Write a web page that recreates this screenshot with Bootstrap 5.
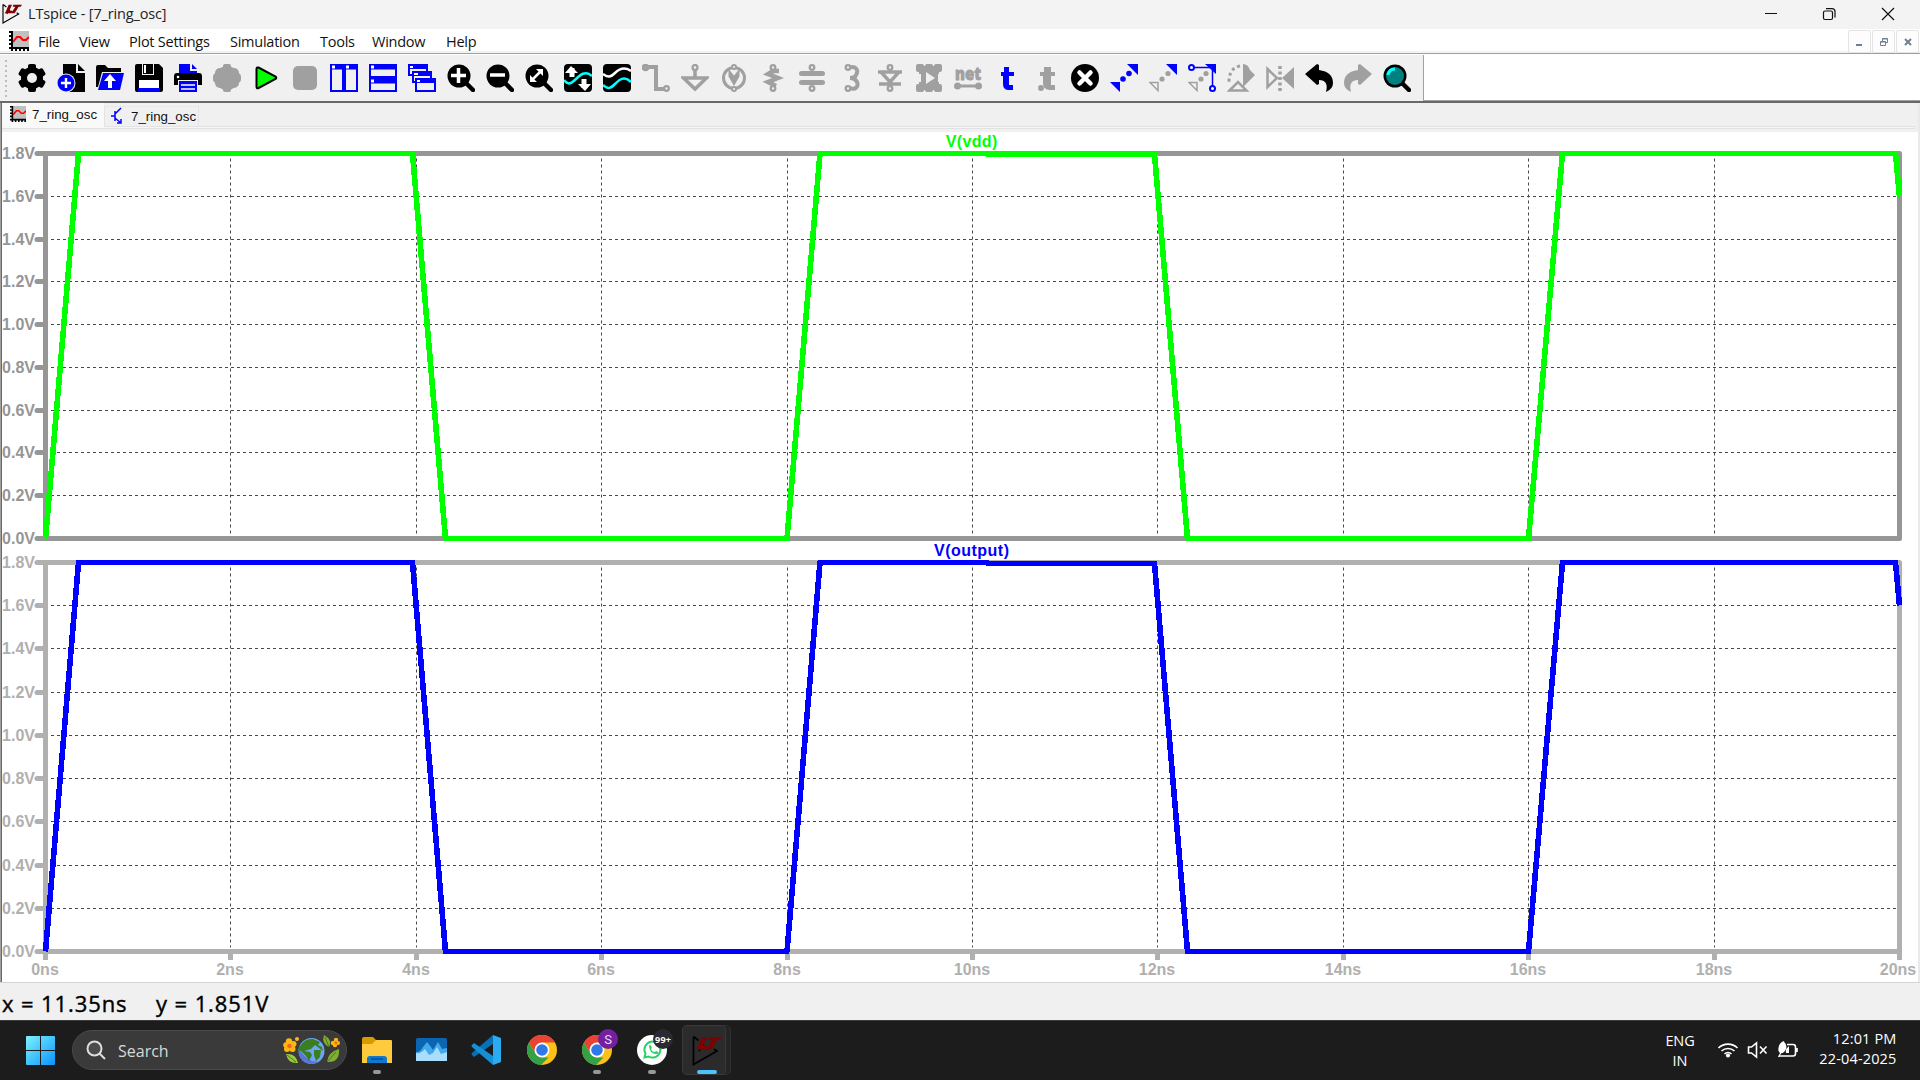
<!DOCTYPE html>
<html lang="en">
<head>
<meta charset="utf-8">
<title>LTspice - [7_ring_osc]</title>
<link href="https://cdn.jsdelivr.net/npm/bootstrap@5.3.0/dist/css/bootstrap.min.css" rel="stylesheet">
<style>
html,body{width:1920px;height:1080px;overflow:hidden;background:#fff}
body{font-family:"Open Sans","Noto Sans",sans-serif;color:#111;line-height:1}
svg{display:block;flex:none}
.titlebar{height:29px;background:#f3f3f3}
.titlebar .caption{font-size:14.5px;letter-spacing:-.15px;color:#222;margin-left:6px;line-height:27px;height:28px}
.menubar{height:25px;border-bottom:1px solid #a0a0a0;box-shadow:inset 0 -2px #f3f3f3}
.menubar .entry{font-size:14.5px;letter-spacing:-.25px;height:24px;line-height:25px;white-space:nowrap}
.mdi{width:23px;height:23px;border:1px solid #e4e4e4;border-radius:2px;background:#fdfdfd}
.toolrow{height:49px;border-bottom:2px solid #696969;border-top:1px solid #fff;box-shadow:inset 0 -1px #a0a0a0}
.tools{width:1424px;background:#f0f0f0;border-right:1px solid #a0a0a0;gap:11px;padding:0 0 0 5px;height:46px}
.grip{width:2px;height:37px;background:repeating-linear-gradient(#bdbdbd 0 2px,#f0f0f0 2px 5px)}
.child{height:879px;border-left:1px solid #a0a0a0;background:#fff;box-shadow:inset 1px 0 #696969,inset -2px 0 #e9e9e9}
.tabs{height:29px;background:#f0f0f0;margin:0 2px 0 1px;font-family:"Liberation Sans",Arial,sans-serif;font-size:13.3px}
.tabs .sheet{height:25px;background:#f9f9f9;width:102px;padding-left:8px}
.tabs .other{height:21px;border:1px solid #e3e3e3;border-top-color:#e8e8e8;margin-top:3px;width:95px;padding-left:6px}
.tabedge{height:3px;border:1px solid #e2e2e2;background:#f6f6f6;margin:0 3px 0 0}
.status{height:38px;background:#f0f0f0;border-top:1px solid #d4d4d4;font-size:22px;letter-spacing:.9px;font-weight:500;color:#000;padding-left:2px;line-height:41px}
.status .coord{white-space:nowrap;-webkit-text-stroke:.4px #000}
.taskbar{height:60px;background:#1c1c1c;border-top:1px solid #3b3b3b;color:#fff}
.searchbox{width:275px;height:40px;border-radius:20px;background:#3a3a3a;border:1px solid #4a4a4a;margin-left:17px;padding:0 6px 0 13px;font-size:16px;color:#d8d8d8}
.app{width:55px;height:59px;padding-top:14px;position:relative}
.app .run{position:absolute;left:23.5px;top:49px;width:8px;height:4px;border-radius:2px;background:#989898}
.app.current .run{left:17.5px;width:20px;background:#4cc2ff}
.app.current::before{content:"";position:absolute;left:3px;top:4px;width:49px;height:50px;border-radius:5px;background:#242424;border:1px solid #303030}
.app.current::after{content:"";position:absolute;left:3px;top:4px;width:44px;height:50px;border-radius:5px;background:#2b2b2b;border:1px solid #393939}
.app.current svg,.app.current .run{z-index:1;position:relative}
.app.current .run{position:absolute}
.tray{font-size:14.5px;line-height:20px;letter-spacing:-.3px}
.tray .clock{letter-spacing:.15px;padding:8px 23.5px 0 0;width:120px}
.axis{font:bold 16px "Liberation Sans",Arial,sans-serif}
</style>
<script src="https://cdn.jsdelivr.net/npm/bootstrap@5.3.0/dist/js/bootstrap.bundle.min.js"></script>
</head>
<body class="d-flex flex-column">
<svg width="0" height="0" class="position-absolute"><defs>
<symbol id="lt" viewBox="0 0 30 32"><path d="M1.5 1.500v28L25 16l-3-2M1.500 1.500l5 4M12 10l-5 6" fill="none" stroke="#000" stroke-width="1.700"/><path d="M10 2h5l-4 9h5l-2 4H4l2-3zM17 2h13l-2 3h-3l-6 10h-5l6-10h-4z" fill="#800000"/></symbol>
<symbol id="plot" viewBox="0 0 20 20"><path fill="#c0c0c0" d="M3 0h17v17H3z"/><path d="M3 0v17h17M0 1h3M0 5h3M0 9h3M0 13h3M0 17h3v3M7 17v3M11 17v3M15 17v3M19 17v3" fill="none" stroke="#000" stroke-width="2"/><path d="M4 11l4-5h3l3 3h3l3-3" stroke="red" stroke-width="2" fill="none"/></symbol>
<symbol id="lens" viewBox="0 0 28 28"><path d="M19 19l7 7" stroke="#000" stroke-width="4.500" stroke-linecap="round"/><circle cx="12" cy="12" r="11.500"/></symbol>
<symbol id="chrome" viewBox="0 0 30 30"><circle cx="15" cy="15" r="15" fill="#fbc116"/><path d="M2 7.500A15 15 0 0 1 28 7.500H15L8.500 18.700z" fill="#ea4335"/><path d="M2 7.500L8.500 18.700 15 22.500h6.500L14 30A15 15 0 0 1 2 7.500z" fill="#34a047"/><circle cx="15" cy="15" r="7.500" fill="#fff"/><circle cx="15" cy="15" r="5.800" fill="#3078e8"/></symbol>
</defs></svg>

<header class="titlebar d-flex">
 <svg width="20" height="22" style="margin:3px 0 0 2px"><use href="#lt"/></svg>
 <div class="caption">LTspice - [7_ring_osc]</div>
 <svg class="ms-auto" width="160" height="29" viewBox="1760 0 160 29" fill="none" stroke="#111" stroke-width="1.200"><path d="M1765 13.500h12M1882 8l12 12M1894 8l-12 12"/><rect x="1823.500" y="11" width="9" height="8.500" rx="1.500"/><path d="M1826 8.600h6q3 0 3 3v6"/></svg>
</header>

<nav class="menubar d-flex" aria-label="Main menu">
 <svg width="20" height="20" style="margin:2px 9px 0 9px"><use href="#plot"/></svg>
 <div class="entry" style="width:41px">File</div><div class="entry" style="width:50px">View</div><div class="entry" style="width:101px">Plot Settings</div><div class="entry" style="width:90px">Simulation</div><div class="entry" style="width:52px">Tools</div><div class="entry" style="width:74px">Window</div><div class="entry">Help</div>
 <div class="ms-auto d-flex gap-1 me-0" style="gap:1px!important;padding:1px 1px 0 0">
  <div class="mdi"><svg width="21" height="21" fill="#708090"><path d="M7 13h6v2H7z"/></svg></div>
  <div class="mdi"><svg width="21" height="21" fill="none" stroke="#708090"><path d="M7.500 10.500h5v4h-5zM7.500 11h5M9.500 10V7.500h5v4H13M9.500 8h5"/></svg></div>
  <div class="mdi"><svg width="21" height="21" stroke="#708090" stroke-width="2"><path d="M8 8l6 6M14 8l-6 6"/></svg></div>
 </div>
</nav>

<div class="toolrow">
<div class="tools d-flex align-items-center">
<div class="grip"></div>
<svg width="28" height="28"><g><rect x="10" y="0" width="8" height="28" rx="2"/><rect x="10" y="0" width="8" height="28" rx="2" transform="rotate(60 14 14)"/><rect x="10" y="0" width="8" height="28" rx="2" transform="rotate(120 14 14)"/></g><circle cx="14" cy="14" r="11"/><circle cx="14" cy="14" r="5" fill="#f0f0f0"/></svg>
<svg width="28" height="28"><path d="M6 0h13v9h9v19H6zM21 0l7 7h-7z"/><circle cx="9" cy="19" r="9.500" fill="#f0f0f0"/><circle cx="9" cy="19" r="8.500" fill="#00f"/><path d="M9 14v10M4 19h10" stroke="#fff" stroke-width="2.400"/></svg>
<svg width="28" height="28"><path d="M0 3q0-2 2-2h7l3 3h13v4H6L2 23H0z"/><path d="M7 9h21l-4 17H2z" fill="#00f"/><path d="M14 24v-9" stroke="#fff" stroke-width="4"/><path d="M8 17l6-7 6 7z" fill="#fff"/></svg>
<svg width="28" height="28"><path d="M2 0h22l4 4v22q0 2-2 2H2q-2 0-2-2V2q0-2 2-2z"/><path d="M7 0h12v11H7z" fill="#f0f0f0"/><path d="M8 0h10v10H8z"/><path d="M9 1h2v8H9z" fill="#fff"/><path d="M4 16h20v8H4z" fill="#fff"/><path d="M3 24h22v4H3z" fill="#00f"/></svg>
<svg width="28" height="28"><path d="M5 0h11v7h7v3H5z" fill="#00f"/><path d="M18 0l5 5h-5z" fill="#00f"/><path d="M3 9h22q3 0 3 3v9H0v-9q0-3 3-3z"/><circle cx="4" cy="13" r="1.300" fill="#fff"/><path d="M4 16h20v12H4z" fill="#f0f0f0"/><path d="M5 17h18v11H5z" fill="#00f"/><path d="M7 21h14M7 25h14" stroke="#fff" stroke-width="1.500"/></svg>
<svg width="28" height="28" fill="#a0a0a0"><circle cx="14" cy="14" r="12"/><rect x="10" width="8" height="28" rx="2"/><rect y="9" width="28" height="10" rx="4"/><rect x="2" y="4" width="24" height="20" rx="5"/></svg>
<svg width="28" height="28"><path d="M4.500 5q0-2 2-1.500l17 9q1.500 1.500 0 2.500l-17 9q-2 1-2-1.500z" fill="#0f0" stroke="#000" stroke-width="2"/></svg>
<svg width="28" height="28"><rect x="2" y="2" width="24" height="24" rx="5" fill="#a0a0a0"/></svg>
<svg width="28" height="28" fill="#f0f0f0" stroke="#00f" stroke-width="2"><path d="M1 1h12v26H1zM15 1h12v26H15z"/><path d="M1 3h26" stroke-width="5"/><path d="M2 3h3M16 3h3" stroke="#fff" stroke-width="3"/></svg>
<svg width="28" height="28" fill="#f0f0f0" stroke="#00f" stroke-width="2"><path d="M1 1h26v12H1zM1 15h26v12H1z"/><path d="M1 3h26M1 17h26" stroke-width="5"/><path d="M2 3h3M2 17h3" stroke="#fff" stroke-width="3"/></svg>
<svg width="28" height="28" fill="#f0f0f0" stroke="#00f" stroke-width="2"><path d="M1 1h18v10H1zM5 8h18v10H5zM8 15h19v12H8z"/><path d="M1 3h19M5 10h19M8 17h19" stroke-width="4"/><path d="M2 3h3M6 10h4M9 17h3" stroke="#fff"/></svg>
<svg width="28" height="28"><use href="#lens"/><path d="M11.500 4v15M4 11.500h15" stroke="#fff" stroke-width="3.500"/></svg>
<svg width="28" height="28"><use href="#lens"/><path d="M4 11h15" stroke="#fff" stroke-width="3.500"/></svg>
<svg width="28" height="28"><use href="#lens"/><path d="M7 16L16 7" stroke="#fff" stroke-width="2.500"/><path d="M11 5h7v7zM5 11v7h7z" fill="#fff"/></svg>
<svg width="28" height="28"><rect width="28" height="28" rx="4"/><path d="M8 4v9M20 15v9" stroke="#fff" stroke-width="5"/><path d="M1 9l6-7 7 7zM14 20h13l-6 7z" fill="#fff"/><path d="M0 16c4 6 8 3 12-1s9-9 16-3" fill="none" stroke="#0ff" stroke-width="2.500"/></svg>
<svg width="28" height="28" fill="none" stroke-width="2.500"><rect width="28" height="28" rx="4" fill="#000"/><path d="M0 10c5 4 8 3 12-1s9-7 16-2" stroke="#fff"/><path d="M0 21c5 5 8 3 12-1s9-9 16-2" stroke="#0ff"/></svg>
<svg width="28" height="28" fill="none" stroke="#a0a0a0"><path d="M4 3h10v22h8" stroke-width="4"/><circle cx="3.500" cy="3.500" r="2" stroke-width="3.500"/><circle cx="24.500" cy="24.500" r="2.300" stroke-width="2.300"/></svg>
<svg width="28" height="28" fill="none" stroke="#a0a0a0"><circle cx="14" cy="3.500" r="2.500" stroke-width="2.300"/><path d="M14 6v8M2.500 14h23L14 25z" stroke-width="3.500"/></svg>
<svg width="28" height="28" fill="none" stroke="#a0a0a0" stroke-width="3"><circle cx="14" cy="14" r="10.500"/><circle cx="14" cy="3" r="2" fill="#f0f0f0" stroke-width="2"/><circle cx="14" cy="25" r="2" fill="#f0f0f0" stroke-width="2"/><path d="M10 9v3l4 7 4-7V9l-4 5z" fill="#a0a0a0"/></svg>
<svg width="28" height="28" fill="none" stroke="#a0a0a0"><path d="M20 7h-6l-5 3 10 4-10 4 8 4" stroke-width="4.500"/><circle cx="14" cy="3.500" r="2.300" fill="#f0f0f0" stroke-width="2.300"/><circle cx="14" cy="24.500" r="2.300" fill="#f0f0f0" stroke-width="2.300"/></svg>
<svg width="28" height="28" fill="none" stroke="#a0a0a0"><path d="M3.500 9.500h21M3.500 18.500h21" stroke-width="5" stroke-linecap="round"/><circle cx="14" cy="3.500" r="2.300" fill="#f0f0f0" stroke-width="2.300"/><circle cx="14" cy="24.500" r="2.300" fill="#f0f0f0" stroke-width="2.300"/></svg>
<svg width="28" height="28" fill="none" stroke="#a0a0a0"><path d="M11 4c8-3 11 2 8 7q-1 3-6 3 5 0 7 4c2 5-2 8-7 6" stroke-width="4"/><circle cx="11" cy="3.500" r="2.300" fill="#f0f0f0" stroke-width="2.300"/><circle cx="11" cy="24.500" r="2.300" fill="#f0f0f0" stroke-width="2.300"/></svg>
<svg width="28" height="28" fill="none" stroke="#a0a0a0"><path d="M2 8h24M5 8l9 10 9-10M3 20h22" stroke-width="3.500"/><circle cx="14" cy="3.500" r="2.300" fill="#f0f0f0" stroke-width="2.300"/><circle cx="14" cy="24.500" r="2.300" fill="#f0f0f0" stroke-width="2.300"/></svg>
<svg width="28" height="28" fill="#a0a0a0"><rect x="4" y="2" width="20" height="24"/><rect x="1" width="8" height="8" rx="2"/><rect x="10" width="8" height="7" rx="2"/><rect x="19" width="8" height="8" rx="2"/><rect x="1" y="20" width="8" height="8" rx="2"/><rect x="10" y="21" width="8" height="7" rx="2"/><rect x="19" y="20" width="8" height="8" rx="2"/><path d="M11 8l9 6-9 6zM4 10h2v8H4zM23 10h2v8h-2z" fill="#f0f0f0"/></svg>
<svg width="28" height="28" fill="#a0a0a0" overflow="visible"><text x="1" y="16" textLength="26" lengthAdjust="spacingAndGlyphs" font-family="Open Sans" font-weight="800" font-size="17" stroke="#a0a0a0" stroke-width=".8">net</text><path d="M4 22h20" stroke="#a0a0a0" stroke-width="3"/><circle cx="3.500" cy="22" r="3.500"/><circle cx="24.500" cy="22" r="3.500"/></svg>
<svg width="28" height="28"><path d="M11 3h5v5h5v4h-5v9h4v5h-4q-6 0-6-6v-8H8V8h3z" fill="#00f"/></svg>
<svg width="28" height="28" fill="#a0a0a0"><path d="M12 3h7v5h4v4h-4v9h4v5h-5q-7 0-7-7v-7H8V8h4z"/><circle cx="9" cy="24" r="3"/></svg>
<svg width="28" height="28"><circle cx="14" cy="14" r="14"/><path d="M8.500 8.500l11 11M19.500 8.500l-11 11" stroke="#fff" stroke-width="4.500" stroke-linecap="round"/></svg>
<svg width="28" height="28" fill="#00f"><path d="M17 0h11v11zM0 18h10v10z"/><circle cx="13" cy="15" r="2.800"/><circle cx="19" cy="9.500" r="2.800"/></svg>
<svg width="28" height="28" fill="#a0a0a0"><path d="M17 0h11v11z" fill="#00f"/><path d="M1 18.500h8v8z" fill="none" stroke="#a0a0a0" stroke-width="1.500"/><circle cx="13" cy="15" r="2.600"/><circle cx="19" cy="9.500" r="2.600"/></svg>
<svg width="28" height="28" fill="#a0a0a0"><path d="M17 0h11v10z" fill="#00f"/><path d="M1 18.500h8v8z" fill="none" stroke="#a0a0a0" stroke-width="1.500"/><circle cx="13" cy="15" r="2.600"/><circle cx="18" cy="9.500" r="2.600"/><path d="M5 3.500h19.500V22" stroke="#00f" stroke-width="1.500" fill="none"/><circle cx="3.500" cy="3.500" r="2.500" fill="#fff" stroke="#00f" stroke-width="2"/><circle cx="24.500" cy="24.500" r="2.500" fill="#fff" stroke="#00f" stroke-width="2"/></svg>
<svg width="28" height="28" fill="#a0a0a0"><path d="M16 0q5 0 7 6l5 5-12 12z"/><path d="M13 2Q2 4 2 18" fill="none" stroke="#a0a0a0" stroke-width="3" stroke-dasharray="3 3"/><path d="M2.500 26.500L11 18l8.500 8.500z" fill="#f0f0f0" stroke="#a0a0a0" stroke-width="2.500"/></svg>
<svg width="28" height="28"><path d="M1.500 5v18L11 14z" fill="none" stroke="#a0a0a0" stroke-width="2.500"/><path d="M28 3v22L16 14z" fill="#a0a0a0"/><path d="M14 2v26" stroke="#a0a0a0" stroke-width="3.500" stroke-dasharray="3 2.500"/></svg>
<svg width="28" height="28"><path d="M0 10L12 0l2 1v5q14 2 14 13 0 6-7 9 3-12-7-12v4l-2 1z"/></svg>
<svg width="28" height="28"><path d="M28 10L16 0l-2 1v5Q0 8 0 19q0 6 7 9-3-12 7-12v4l2 1z" fill="#a0a0a0"/></svg>
<svg width="28" height="28"><use href="#lens"/><circle cx="12" cy="12" r="9" fill="#008080"/><path d="M5 11q1-6 7-6" stroke="#0ff" stroke-width="3" fill="none"/></svg>
</div></div>

<main class="child">
 <div class="tabs">
  <div class="d-flex" style="height:23px">
   <div class="sheet d-flex"><svg width="16" height="16" style="margin:3px 6px 0 0"><use href="#plot"/></svg><span style="padding-top:5px">7_ring_osc</span></div>
   <div class="other d-flex"><svg width="14" height="17" fill="none" stroke="#00f" stroke-width="1.500" style="margin:0 6px 0 0"><path d="M0 9h4M4 4v10M4 7l6-6M4 11l6 5M10 12v4H6"/></svg><span style="padding-top:3px">7_ring_osc</span></div>
  </div>
  <div class="tabedge"></div>
 </div>
 <svg id="wave" width="1918" height="848" viewBox="1 132 1918 848"></svg>
</main>

<footer class="status d-flex">
 <div class="coord" style="width:154px">x = 11.35ns</div><div class="coord">y = 1.851V</div>
</footer>

<div class="taskbar d-flex">
 <svg width="29" height="29" style="margin:15px 0 0 26px"><defs><linearGradient id="w" x1="0" y1="0" x2="29" y2="29" gradientUnits="userSpaceOnUse"><stop stop-color="#7df3fb"/><stop offset="1" stop-color="#0a93ff"/></linearGradient></defs><path d="M0 1q0-1 1-1h13v14H0zM15 0h13q1 0 1 1v13H15zM0 15h14v14H1q-1 0-1-1zM15 15h14v13q0 1-1 1H15z" fill="url(#w)"/></svg>
 <div class="searchbox d-flex align-items-center" style="margin-top:9px">
  <svg width="20" height="20" fill="#4b4b4b" stroke="#ddd" stroke-width="2"><path d="M13 13l6 6"/><circle cx="8.500" cy="8.500" r="7"/></svg>
  <span style="margin-left:12px;padding-top:2px">Search</span>
  <svg class="ms-auto" width="57" height="30"><circle cx="28.500" cy="16" r="13" fill="#6aa8f5"/><path d="M16 14a13 13 0 0 0 21 12q-12 3-21-12z" fill="#5a74dc"/><path d="M17 11q5-8 13-7l7 3-2 3 4 2 1 4-4-3-4-3-4 4-7 2 6 1 2 3-3 6-3-5-5-5-4-1zM31 15l7 0-1 7-4 4-2-6z" fill="#3c7d22"/><g fill="#ffb612"><circle cx="6" cy="6.500" r="3.200"/><circle cx="10.500" cy="9" r="3"/><circle cx="9.500" cy="14" r="3"/><circle cx="4" cy="14" r="3"/><circle cx="3" cy="10" r="2.800"/><circle cx="14" cy="4" r="2"/><circle cx="53" cy="5" r="2.200"/><circle cx="50" cy="8" r="2.200"/><circle cx="55" cy="8" r="2"/><circle cx="52" cy="10" r="2.200"/></g><circle cx="6.500" cy="11" r="2.300" fill="#f26b1d"/><circle cx="53" cy="8" r="1.400" fill="#f26b1d"/><path d="M3 19q10-1 12 9-10 1-12-9z" fill="#9bc93c"/><path d="M41 0q9 5 5 12-8-4-5-12zM56 14q1 14-12 13 1-10 12-13z" fill="#7fae30"/><path d="M44 27l9-10M4 20l9 7M42 2l4 10" stroke="#4b7a1b"/></svg>
 </div>
 <div class="d-flex" style="margin-left:2px">
  <div class="app"><svg class="mx-auto" width="30" height="30"><path d="M0 4q0-2 2-2h9l4 4-3 4H0z" fill="#d99a00"/><path d="M0 9h10l4-4h15q1 0 1 1v22H0z" fill="#ffcb3d"/><path d="M5 28v-4q0-3 3-3h14q3 0 3 3v4z" fill="#0f78cf"/><path d="M9 24h12" stroke="#064f91" stroke-width="1.500"/></svg><span class="run"></span></div>
  <div class="app"><svg class="mx-auto" width="31" height="30"><rect y="3" width="31" height="23" rx="1.500" fill="#0c65b0"/><path d="M0 17q4 1 7-5l4-5 4 5 2 3 5-8 4 7 5-1v13H0z" fill="#41a9ec"/><path d="M0 18q5 1 9-4l4 6 4-2 4-6 4 7 6-2v9H0z" fill="#a9ddfc"/></svg></div>
  <div class="app"><svg class="mx-auto" width="31" height="30"><path d="M22 9L3 22l-2-2q-1-1 0-2L22 0z" fill="#0870b8"/><path d="M22 21L3 8l-2 2q-1 1 0 2l21 18z" fill="#1590d8"/><path d="M22 0l8 3v24l-8 3z" fill="#2aabf2"/></svg></div>
  <div class="app"><svg class="mx-auto" width="30" height="30"><use href="#chrome"/></svg></div>
  <div class="app" style="padding-top:8px"><svg class="mx-auto" width="46" height="38"><use href="#chrome" x="8" y="6" width="30" height="30"/><circle cx="34" cy="10" r="10" fill="#7420a0"/><text x="34" y="15" text-anchor="middle" font-family="Roboto" font-size="13" fill="#e9d7f2">S</text></svg><span class="run"></span></div>
  <div class="app" style="padding-top:8px"><svg class="mx-auto" width="46" height="38"><circle cx="23" cy="21" r="15" fill="#fff"/><path d="M15.500 28.500l1-4a8 8 0 1 1 3 3z" fill="none" stroke="#25d366" stroke-width="2"/><path d="M20 17q1-2 2 0l1 2-1 1q1 3 4 3l1-1 2 1q1 2-2 2-6 0-7-8z" fill="#25d366"/><circle cx="34" cy="10" r="10" fill="#2a2a33"/><text x="34" y="13.500" text-anchor="middle" font-family="Open Sans" font-weight="700" font-size="9" textLength="16" fill="#fff">99+</text></svg><span class="run"></span></div>
  <div class="app current"><svg width="30" height="32" style="margin-left:13px"><use href="#lt"/></svg><span class="run"></span></div>
 </div>
 <div class="tray d-flex ms-auto">
  <div class="text-center" style="padding-top:10px;width:40px;margin-right:18px;letter-spacing:-.1px">ENG<br>IN</div>
  <svg width="82" height="59" viewBox="1718 1021 82 59" fill="none" stroke="#fff" stroke-width="1.600"><path d="M1718.500 1048a13.500 13.500 0 0 1 19 0M1721.500 1051a9.500 9.500 0 0 1 13 0M1724.500 1054a5 5 0 0 1 7 0"/><circle cx="1728" cy="1055.500" r="1.300" fill="#fff"/><path d="M1748.500 1047h3l5-4v14l-5-4h-3zM1760 1046.500l6.500 7M1766.500 1046.500l-6.500 7"/><path d="M1787 1044.500h6q2.500 0 2.500 2.500v6.500q0 2.500-2.500 2.500h-14M1797 1048v4"/><path d="M1778.500 1051q-1-7 5-10 4 4 2.500 8-2 5-6 4zM1786 1053q-1-4 3-7v7z" fill="#fff" stroke="none"/><path d="M1778.500 1057l5-9" stroke-width="1.200"/></svg>
  <div class="clock text-end">12:01 PM<br>22-04-2025</div>
 </div>
</div>

<script>
// Two stacked panes share the time axis: 0 to 20 ns, 185.4 px per 2 ns.
const L=45.5,R=1899.5,STEP=185.4;
const gridX=i=>Math.floor(L+i*STEP-.05)+.5;
const panes=[
 {top:153.5,bottom:538.5,frame:'#969696',trace:'#00ff00',name:'V(vdd)',len:51.5,base:147,end:196.5},
 {top:562.5,bottom:951.5,frame:'#b0b0b0',trace:'#0000ff',name:'V(output)',len:75,base:556,end:605.5}
];
let s='';
panes.forEach((p,k)=>{
 const h=(p.bottom-p.top)/9;
 for(let i=1;i<10;i++){
  s+=`<path d="M${gridX(i)} ${p.top+5}V${p.bottom-4}" stroke="#484848" stroke-dasharray="3 3"/>`;
 }
 for(let i=1;i<9;i++){
  const y=Math.floor(p.top+i*h)+.5;
  s+=`<path d="M51 ${y}H1896" stroke="#484848" stroke-dasharray="3 3"/>`;
 }
 s+=`<path d="M${L} ${p.top}H${R}V${p.bottom}H${L}Z" fill="none" stroke="${p.frame}" stroke-width="5" stroke-linejoin="round"/>`;
 for(let i=0;i<10;i++){
  const y=Math.floor(p.top+i*h)+.5;
  s+=`<path d="M37 ${y}H44" stroke="${p.frame}" stroke-width="5" stroke-linecap="round"/>`;
  s+=`<text class="axis" x="2" y="${y+5.5}" textLength="33" fill="${p.frame}">${(1.8-.2*i).toFixed(1)}V</text>`;
 }
 if(k==1)for(let i=0;i<=10;i++){
  const x=i==0?L:i==10?R:gridX(i);
  s+=`<path d="M${x} 952V960" stroke="${p.frame}" stroke-width="5"/><text class="axis" x="${x-(i==10?1.5:.5)}" y="975" text-anchor="middle" fill="${p.frame}">${2*i}ns</text>`;
 }
 const t=p.top,b=p.bottom;
 s+=`<polyline points="45.5,${b} 78.500,${t} 412.5,${t} 445.5,${b} 787,${b} 820,${t} 987,${t} 988,${t+1} 1154.5,${t+1} 1187.500,${b} 1528.5,${b} 1562.5,${t} 1895.5,${t} 1899.5,${p.end}" fill="none" stroke="${p.trace}" stroke-width="5.6" stroke-linejoin="round" shape-rendering="crispEdges"/>`;
 s+=`<text class="axis" x="971.5" y="${p.base}" text-anchor="middle" textLength="${p.len}" fill="${p.trace}">${p.name}</text>`;
});
document.getElementById('wave').innerHTML=s;
</script>
</body>
</html>
